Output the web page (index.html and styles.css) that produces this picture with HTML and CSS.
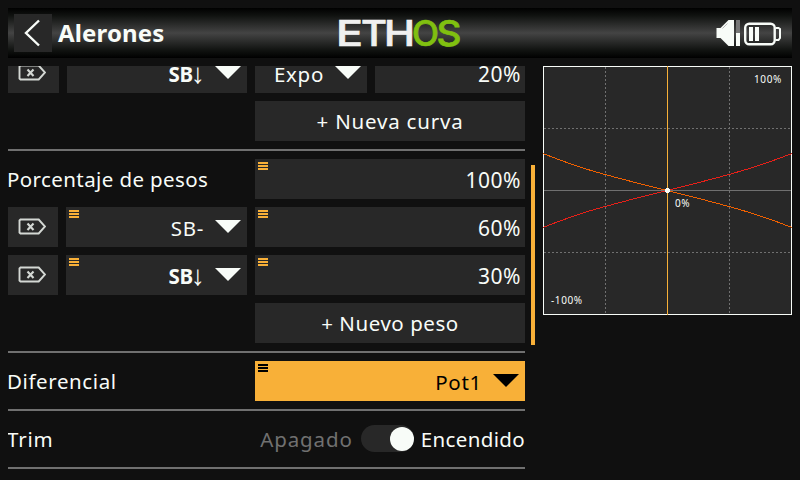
FILE: index.html
```html
<!DOCTYPE html>
<html lang="es">
<head>
<meta charset="utf-8">
<title>Alerones</title>
<link rel="stylesheet" href="styles.css">
</head>
<body>
<svg class="defs" aria-hidden="true">
  <symbol id="del" viewBox="0 0 28 18"><path d="M2.500 1.500h18.200l6.300 7-6.300 7H2.500l-1-1v-12z" fill="none" stroke="#d4d8d4" stroke-width="1.900"/><path d="M9.500 5.500l6 6.500m0-6.500l-6 6.500" stroke="#d4d8d4" stroke-width="2.100"/></symbol>
  <symbol id="tri" viewBox="0 0 26 13"><path d="M0 0h26L13 13z" fill="currentColor"/></symbol>
  <symbol id="menu" viewBox="0 0 10 8"><path d="M0 1h10M0 4h10M0 7h10" stroke="currentColor" stroke-width="2"/></symbol>
</svg>
<header class="bar">
  <div class="back"><svg width="38" height="38"><path d="M25 6.500L12 19l13 12.500" fill="none" stroke="#f8fcf8" stroke-width="2.400"/></svg></div>
  <h1>Alerones</h1>
  <svg class="logo" width="124" height="30"><g class="w"><text x="-2" y="28" textLength="27" lengthAdjust="spacingAndGlyphs">E</text><text x="23" y="28" textLength="26" lengthAdjust="spacingAndGlyphs">T</text><text x="46" y="28" textLength="31" lengthAdjust="spacingAndGlyphs">H</text></g><g class="g"><text x="74" y="28" textLength="27" lengthAdjust="spacingAndGlyphs">O</text><text x="98.500" y="28" textLength="25" lengthAdjust="spacingAndGlyphs">S</text></g></svg>
  <svg class="status" width="66" height="28">
    <path d="M.5 9h4l8-8H18v26h-5.500l-8-8h-4z" fill="#f8fcf8"/><path d="M6.500 9.500l5-5" stroke="#bbb"/>
    <path d="M20 1h4v13h-4z" fill="#777"/><path d="M20 14h4v13h-4z" fill="#f8fcf8"/>
    <rect x="29.200" y="4.700" width="29.500" height="20.500" rx="4" fill="none" stroke="#f8fcf8" stroke-width="2.400"/><path d="M59.500 9h3l1.500 1v9l-1.500 2h-3" fill="none" stroke="#f8fcf8" stroke-width="2"/>
    <path d="M33 8h4v14h-4zM39 8h4v14h-4z" fill="#f8fcf8"/>
  </svg>
</header>
<main>
  <section class="list">
    <div class="row curve">
      <div class="box del"><svg><use href="#del"/></svg></div>
      <div class="box sel"><b>SB</b><i>↓</i><svg class="tri"><use href="#tri"/></svg></div>
      <div class="box sel"><span class="expo">Expo</span><svg class="tri"><use href="#tri"/></svg></div>
      <div class="box num">20%</div>
    </div>
    <div class="row"><div class="box btn">+ Nueva curva</div></div>
    <hr>
    <div class="row"><span class="label">Porcentaje de pesos</span><div class="box num"><svg class="menu"><use href="#menu"/></svg>100%</div></div>
    <div class="row weight">
      <div class="box del"><svg><use href="#del"/></svg></div>
      <div class="box sel"><svg class="menu"><use href="#menu"/></svg><span class="expo">SB-</span><svg class="tri"><use href="#tri"/></svg></div>
      <div class="box num"><svg class="menu"><use href="#menu"/></svg>60%</div>
    </div>
    <div class="row weight">
      <div class="box del"><svg><use href="#del"/></svg></div>
      <div class="box sel"><svg class="menu"><use href="#menu"/></svg><b>SB</b><i>↓</i><svg class="tri"><use href="#tri"/></svg></div>
      <div class="box num"><svg class="menu"><use href="#menu"/></svg>30%</div>
    </div>
    <div class="row"><div class="box btn tight">+ Nuevo peso</div></div>
    <hr>
    <div class="row"><span class="label dif">Diferencial</span><div class="box sel active"><svg class="menu"><use href="#menu"/></svg><span class="expo">Pot1</span><svg class="tri"><use href="#tri"/></svg></div></div>
    <hr>
    <div class="row"><span class="label trim">Trim</span><div class="toggle"><span class="off">Apagado</span><span class="switch"></span><span class="on">Encendido</span></div></div>
    <hr>
  </section>
  <div class="scroll"></div>
  <svg class="chart" width="249" height="249" shape-rendering="crispEdges">
    <rect x=".5" y=".5" width="248" height="248" fill="#282828" stroke="#f8fcf8"/>
    <path d="M62.500 1v247M186.500 1v247M1 62.500h247M1 186.500h247" stroke="#707070" stroke-dasharray="2 2"/>
    <path d="M1 124.500h247" stroke="#707070"/>
    <path d="M0 87.500Q31 100 62 108.500T124 124.500T186 140.500T249 161.500" fill="none" stroke="#f06000"/>
    <path d="M0 161.500Q31 149 62 140.500T124 124.500T186 108.500T249 87.500" fill="none" stroke="#e82018"/>
    <path d="M124.500 0v249" stroke="#f8b038"/>
    <path d="M123 122h3v1h1v3h-1v1h-3v-1h-1v-3h1z" fill="#f8fcf8"/>
    <text x="211" y="17">100%</text><text x="132" y="141">0%</text><text x="8" y="238">-100%</text>
  </svg>
</main>
</body>
</html>
```
FILE: styles.css
```css
* { box-sizing: border-box; }
body { margin: 0; padding: 8px; width: 800px; height: 480px; overflow: hidden; background: #101010; color: #f8fcf8; font: 20.5px/40px "Noto Sans", sans-serif; letter-spacing: .4px; white-space: nowrap; }
svg { display: block; flex: none; }
.defs { position: absolute; width: 0; height: 0; }
.bar { display: grid; grid-template-columns: 38px 286px 124px 1fr 66px; height: 50px; padding: 0 10px 0 6px; align-items: center; background: linear-gradient(#000, #101210 15%, #444 50%, #101210 85%, #000); }
.back { width: 38px; height: 38px; background: #282828; }
h1 { margin: 0 0 0 6px; font-size: 24px; line-height: 50px; letter-spacing: .15px; }
.logo { overflow: visible; }
.logo text { font: 500 35px Inter, sans-serif; letter-spacing: 0; stroke-width: .7px; }
.w { fill: #f0f0f0; stroke: #f0f0f0; }
.g { fill: #80c010; stroke: #80c010; }
.status { grid-column: 5; }
main { display: flex; height: 414px; margin-top: 8px; }
.list { display: flex; flex-direction: column; justify-content: flex-end; gap: 8px; width: 517px; height: 403px; overflow: hidden; }
.row { display: grid; grid-template-columns: 1fr 270px; flex: none; height: 40px; }
.row > :last-child { grid-column: -2; }
.curve { grid-template-columns: 51px 180px 112px 150px; gap: 8px; }
.weight { grid-template-columns: 50px 181px 270px; gap: 8px; }
hr { flex: none; width: 100%; height: 2px; margin: 0; border: 0; background: #707070; }
.box { position: relative; display: flex; align-items: center; height: 40px; background: #282828; padding-top: 2px; }
.label { margin-left: -1px; }
.dif { letter-spacing: .6px; }
.trim { letter-spacing: .8px; }
.del { padding: 0 0 0 10px; }
.del svg { width: 28px; height: 18px; }
.sel { justify-content: flex-end; padding-right: 6px; }
.expo { letter-spacing: .7px; }
.tri { width: 26px; height: 13px; margin: -3px 0 0 11px; }
.menu { position: absolute; left: 3px; top: 3px; width: 10px; height: 8px; color: #f8b038; }
.num { justify-content: flex-end; padding-right: 4px; font-size: 21px; letter-spacing: .5px; }
.btn { justify-content: center; white-space: pre; padding-top: 0; letter-spacing: .8px; }
.tight { letter-spacing: .55px; }
b { letter-spacing: -.2px; }
i { width: 10px; font: 28px/30px "Liberation Sans", sans-serif; letter-spacing: 0; text-indent: -2px; margin-right: 1px; }
.active { background: #f8b038; color: #000; }
.active .menu { color: #000; }
.toggle { display: flex; align-items: center; justify-content: flex-end; }
.off { color: #707070; letter-spacing: .9px; }
.on { letter-spacing: .35px; }
.switch { width: 53px; height: 27px; margin: -2px 7px 0 8px; padding: 2px 0 1px; border-radius: 14px; background: #282828; }
.switch::after { content: ""; display: block; width: 24px; height: 24px; margin-left: auto; border-radius: 50%; background: #f8fcf8; }
.scroll { width: 4px; height: 180px; margin: 99px 8px 0 6px; background: #f8b038; }
.chart text { font: 10px "Noto Sans", sans-serif; letter-spacing: .6px; fill: #f8fcf8; }
```
